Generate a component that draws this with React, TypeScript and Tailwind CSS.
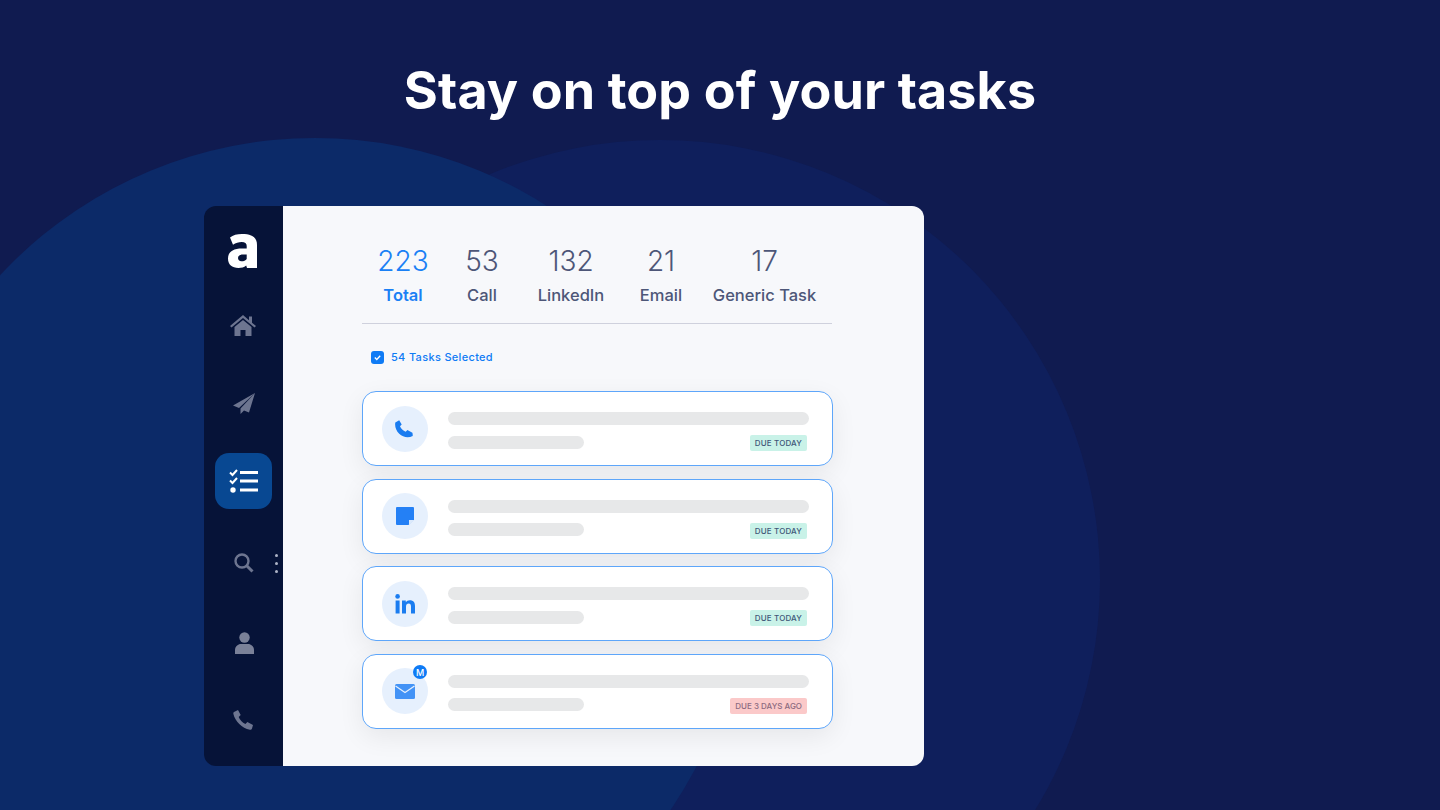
import React from "react";

const cards = [
  { icon: "phone", due: "DUE TODAY" },
  { icon: "note", due: "DUE TODAY" },
  { icon: "in", due: "DUE TODAY" },
  { icon: "mail", due: "DUE 3 DAYS AGO", late: true },
];

function CardIcon({ kind }: { kind: string }) {
  if (kind === "phone")
    return (
      <svg viewBox="0 0 20 18" className="h-[18px] w-[20px]">
        <path fill="#1a7cf0" d="M.3 2.600 4.200.2l2.500 4.300-1.700 1.800c1 2.400 3.100 4.400 5.700 5.400l1.700-1.600 5 2.700c.3 1.300.4 2.300.3 3.200-4.500 2.400-9.800 1.300-13.500-2.200C1 10.700-.4 6.500.3 2.600Z" />
      </svg>
    );
  if (kind === "note")
    return (
      <svg viewBox="0 0 18 18" className="h-[18px] w-[18px]">
        <path fill="#2480f5" d="M1 0h16a1 1 0 0 1 1 1v11.500L12.500 18H1a1 1 0 0 1-1-1V1a1 1 0 0 1 1-1Z" />
        <path fill="#dbe9fb" d="M13 13h5l-5 5Z" />
      </svg>
    );
  if (kind === "in")
    return (
      <svg viewBox="0 0 20 20" className="h-[20px] w-[20px]">
        <circle cx="2.600" cy="2.400" r="2.300" fill="#1a7cf0" />
        <path fill="#1a7cf0" d="M.6 6.500h4V19.500h-4ZM7 6.500h3.800v1.800c.8-1.300 2.200-2.100 4-2.100 3.500 0 5.200 2.100 5.200 5.700v7.600h-4v-6.900c0-1.900-.7-3-2.300-3-1.700 0-2.700 1.200-2.700 3.100v6.800H7Z" />
      </svg>
    );
  return (
    <svg viewBox="0 0 20 15" className="h-[15px] w-[20px]">
      <rect width="20" height="15" rx="1.500" fill="#4393f6" />
      <path d="M.5 2 10 8.500 19.500 2" fill="none" stroke="#e6f0fd" strokeWidth="1.200" />
    </svg>
  );
}

export default function App() {
  return (
    <div className="relative h-[810px] w-[1440px] overflow-hidden bg-[#101b50] font-['Inter',sans-serif]">
      <div className="absolute left-[220px] top-[140px] h-[880px] w-[880px] rounded-full bg-[#0f1f5c]" />
      <div className="absolute left-[-115px] top-[138px] h-[860px] w-[860px] rounded-full bg-[#0c2a68]" />
      <div className="relative flex flex-col">
        <h1 className="mt-[57px] h-[149px] self-center text-[52px] font-bold leading-[68px] tracking-[0.12px] text-white">Stay on top of your tasks</h1>
        <div className="ml-[204px] flex h-[560px] w-[720px] overflow-hidden rounded-[12px]">
          <aside className="flex w-[79px] shrink-0 flex-col items-center bg-[#061338] pt-[28px]">
            <svg viewBox="0 0 29 34" className="mr-[2px] h-[34px] w-[29px]">
              <path fill="#fff" fillRule="evenodd" d="M2 3.500C5 1 9 0 14 0c10 0 15 3.500 15 11v23H19l-.8-2.400C16 33.400 13.500 34 10.500 34 4 34 0 30.500 0 24.500 0 18 5 14.500 14 14.500h4.700V12c0-2.500-1.700-4-5-4-3 0-6 1-8.700 2.800ZM18.700 20.500H15c-3.200 0-5 1.300-5 3.600 0 2 1.300 3.200 3.400 3.200 2.500 0 4.200-1 5.300-2.400Z" />
            </svg>
            <div className="relative mt-[47px] flex flex-col items-center">
              <div className="flex h-[78px] w-[57px] items-start justify-center">
                <svg viewBox="0 0 26 21" className="mr-[1px] h-[21px] w-[26px]">
                  <path fill="#6d7590" d="M13 0 0 11l1.500 1.500L13 3l11.500 9.500L26 11l-4-3.300V1.500h-3v3.800ZM13 5 4.500 12v9h6v-6h5v6h6v-9Z" />
                </svg>
              </div>
              <div className="flex h-[60px] w-[57px] items-start justify-center">
                <svg viewBox="0 0 22 21" className="h-[21px] w-[22px]">
                  <path fill="#6d7590" d="M22 0 0 12.500l6 2.500ZM22 0 7.500 15.500V21l3.500-3.500 5 2Z" />
                </svg>
              </div>
              <div className="flex h-[56px] w-[57px] items-center justify-center rounded-[14px] bg-[#084892]">
                <svg viewBox="0 0 30 24" className="h-[24px] w-[30px]">
                  <path d="M1 3.500 3.500 6 8 1M1 11.500 3.500 14 8 9" fill="none" stroke="#fff" strokeWidth="2" />
                  <circle cx="4" cy="21" r="2.700" fill="#fff" />
                  <path d="M11 2h18v3H11ZM11 10.500h18v3H11ZM11 19.500h18v3H11Z" fill="#fff" />
                </svg>
              </div>
              <div className="relative mt-[44px] flex h-[79px] w-[57px] items-start justify-center">
                <svg viewBox="0 0 20 20" className="ml-[1px] h-[20px] w-[20px]">
                  <circle cx="8" cy="8" r="6.500" fill="none" stroke="#6d7590" strokeWidth="2.400" />
                  <path d="m12.500 12.500 6 6" stroke="#6d7590" strokeWidth="3" />
                </svg>
                <div className="absolute left-[60px] top-[1px] flex flex-col gap-[5px]">
                  <span className="h-[3px] w-[3px] rounded-full bg-[#aeb4c6]" />
                  <span className="h-[3px] w-[3px] rounded-full bg-[#aeb4c6]" />
                  <span className="h-[3px] w-[3px] rounded-full bg-[#aeb4c6]" />
                </div>
              </div>
              <div className="flex h-[77px] w-[57px] items-start justify-center">
                <svg viewBox="0 0 19 22" className="ml-[1px] h-[22px] w-[19px]">
                  <circle cx="9.500" cy="5.500" r="5.200" fill="#7a8198" />
                  <path fill="#7a8198" d="M0 22v-4c0-3.500 3-6 6-6h7c3 0 6 2.500 6 6v4Z" />
                </svg>
              </div>
              <div className="flex w-[57px] items-start justify-center">
                <svg viewBox="0 0 22 22" className="ml-[1px] h-[22px] w-[22px]">
                  <path fill="#6d7590" d="M1 3 5 1l2.700 5-2 2c1 2.700 3.600 5.500 6.700 7l2-2 5.600 2.900-1 3.600c-.3.900-1.200 1.400-2.100 1.200C9 19.300 2 12 .4 5c-.2-.8.100-1.600.6-2Z" />
                </svg>
              </div>
            </div>
          </aside>
          <main className="w-[641px] shrink-0 bg-[#f7f8fb] pl-[79px] pr-[92px] pt-[38px]">
            <div className="flex h-[80px] items-start border-b border-[#cfd1dd] text-[#4d5678]">
              <div className="ml-[15px] flex w-[52px] flex-col items-center text-[#1a80f5]">
                <span className="text-[28px] font-light leading-[34px]">223</span>
                <span className="mt-[7px] text-[16.5px] font-semibold leading-[20px]">Total</span>
              </div>
              <div className="ml-[37px] flex w-[32px] flex-col items-center">
                <span className="text-[28px] font-light leading-[34px]">53</span>
                <span className="mt-[7px] text-[16.5px] font-medium leading-[20px]">Call</span>
              </div>
              <div className="ml-[40px] flex w-[66px] flex-col items-center">
                <span className="text-[28px] font-light leading-[34px]">132</span>
                <span className="mt-[7px] text-[16.5px] font-medium leading-[20px]">LinkedIn</span>
              </div>
              <div className="ml-[36px] flex w-[42px] flex-col items-center">
                <span className="text-[28px] font-light leading-[34px]">21</span>
                <span className="mt-[7px] text-[16.5px] font-medium leading-[20px]">Email</span>
              </div>
              <div className="ml-[31px] flex w-[103px] shrink-0 flex-col items-center">
                <span className="text-[28px] font-light leading-[34px]">17</span>
                <span className="mt-[7px] whitespace-nowrap text-[16.5px] font-medium leading-[20px]">Generic Task</span>
              </div>
            </div>
            <div className="ml-[9px] mt-[26px] flex h-[14px] items-center gap-[7px]">
              <span className="flex h-[13px] w-[13px] items-center justify-center rounded-[3px] bg-[#0f7bf5]">
                <svg viewBox="0 0 10 10" className="h-[9px] w-[9px]">
                  <path d="m2 5 2.200 2.200L8 3" fill="none" stroke="#fff" strokeWidth="1.500" />
                </svg>
              </span>
              <span className="text-[11px] font-medium leading-[14px] tracking-[0.32px] text-[#0f7bf5]">54 Tasks Selected</span>
            </div>
            <div className="mt-[27px] flex flex-col gap-[12.6px]">
              {cards.map((c) => (
                <div key={c.icon} className="flex h-[75px] w-[471px] items-center rounded-[14px] border border-[#5ea6fa] bg-white pl-[19px] pr-[23px] shadow-[0_8px_26px_rgba(0,0,0,0.07)]">
                  <div className="relative flex h-[46px] w-[46px] shrink-0 items-center justify-center rounded-full bg-[#e6f0fd]">
                    <CardIcon kind={c.icon} />
                    {c.late && (
                      <span className="absolute right-[1px] top-[-3px] flex h-[14px] w-[14px] items-center justify-center rounded-full bg-[#0f7bf5] text-[9px] font-medium text-white">M</span>
                    )}
                  </div>
                  <div className="ml-[20px] flex-1 pt-[5px]">
                    <div className="h-[13px] rounded-full bg-[#e7e8e9]" />
                    <div className="mt-[9px] flex h-[16px] items-center justify-between">
                      <div className="h-[13px] w-[136px] rounded-full bg-[#e7e8e9]" />
                      <span className={`mr-[2px] mt-[2px] flex h-[16px] items-center rounded-[2px] px-[5px] text-[8px] font-medium ${c.late ? "bg-[#fbc9c9] text-[#8c6a80] tracking-[0px]" : "bg-[#c9f2e8] text-[#3f5778] tracking-[0.15px]"}`}>{c.due}</span>
                    </div>
                  </div>
                </div>
              ))}
            </div>
          </main>
        </div>
      </div>
    </div>
  );
}
